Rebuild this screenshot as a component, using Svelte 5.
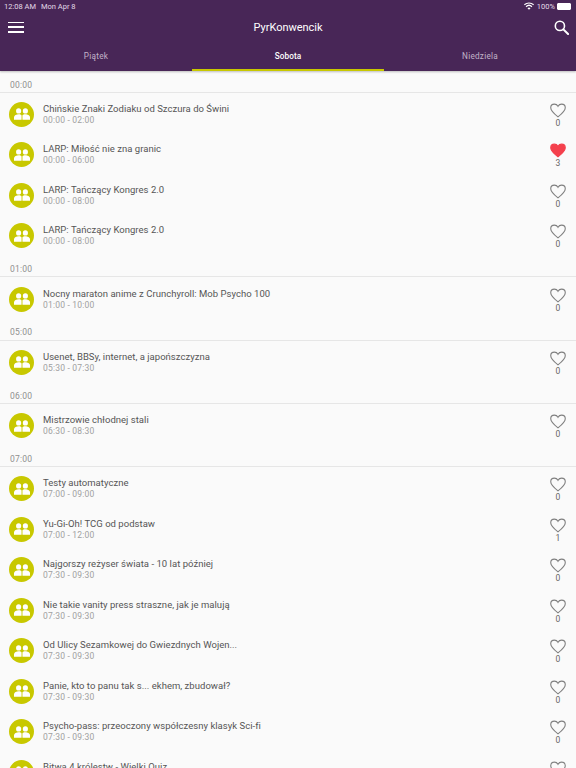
<script>
  const groups = [
    { time: '00:00', items: [
      ['Chińskie Znaki Zodiaku od Szczura do Świni', '00:00 - 02:00', 0],
      ['LARP: Miłość nie zna granic', '00:00 - 06:00', 3, true],
      ['LARP: Tańczący Kongres 2.0', '00:00 - 08:00', 0],
      ['LARP: Tańczący Kongres 2.0', '00:00 - 08:00', 0]
    ]},
    { time: '01:00', items: [['Nocny maraton anime z Crunchyroll: Mob Psycho 100', '01:00 - 10:00', 0]] },
    { time: '05:00', items: [['Usenet, BBSy, internet, a japońszczyzna', '05:30 - 07:30', 0]] },
    { time: '06:00', items: [['Mistrzowie chłodnej stali', '06:30 - 08:30', 0]] },
    { time: '07:00', items: [
      ['Testy automatyczne', '07:00 - 09:00', 0],
      ['Yu-Gi-Oh! TCG od podstaw', '07:00 - 12:00', 1],
      ['Najgorszy reżyser świata - 10 lat później', '07:30 - 09:30', 0],
      ['Nie takie vanity press straszne, jak je malują', '07:30 - 09:30', 0],
      ['Od Ulicy Sezamkowej do Gwiezdnych Wojen...', '07:30 - 09:30', 0],
      ['Panie, kto to panu tak s... ekhem, zbudował?', '07:30 - 09:30', 0],
      ['Psycho-pass: przeoczony współczesny klasyk Sci-fi', '07:30 - 09:30', 0],
      ['Bitwa 4 królestw - Wielki Quiz', '07:30 - 09:30', 0]
    ]}
  ];
  const heart = 'M12 20.5 C5 15 2 11.5 2 8 C2 5 4.3 3 7 3 C9 3 11 4.2 12 6 C13 4.2 15 3 17 3 C19.7 3 22 5 22 8 C22 11.5 19 15 12 20.5 Z';
</script>

<div class="page">
  <header class="top">
    <div class="status">
      <span class="clock">12:08 AM</span>
      <span class="date">Mon Apr 8</span>
      <span class="spacer"></span>
      <svg class="wifi" width="10" height="8" viewBox="0 0 22 17" aria-hidden="true">
        <path fill="#fff" d="M11 17 7.6 13.2a5 5 0 0 1 6.8 0zM5.6 11a8 8 0 0 1 10.8 0l2-2.2a11 11 0 0 0-14.8 0zM1.6 6.6a14 14 0 0 1 18.8 0l1.6-2A17 17 0 0 0 0 4.600z"/>
      </svg>
      <span class="pct">100%</span>
      <span class="battery"><span class="fill"></span></span>
    </div>
    <div class="bar">
      <button class="menu" aria-label="Menu"><span></span><span></span><span></span></button>
      <h1>PyrKonwencik</h1>
      <svg class="search" width="15" height="15" viewBox="0 0 16 16" aria-hidden="true">
        <circle cx="6.300" cy="6.300" r="4.900" fill="none" stroke="#fff" stroke-width="1.700"/>
        <path d="M10 10l5 5" stroke="#fff" stroke-width="2.200" stroke-linecap="round"/>
      </svg>
    </div>
    <nav class="tabs">
      <div class="tab">Piątek</div>
      <div class="tab active">Sobota</div>
      <div class="tab">Niedziela</div>
    </nav>
  </header>

  <main class="list">
    {#each groups as g}
      <div class="section">{g.time}</div>
      {#each g.items as it}
        <div class="row">
          <div class="avatar">
            <svg width="16" height="12" viewBox="0 0 18 13" aria-hidden="true">
              <circle cx="5.200" cy="3" r="2.900" fill="#fff"/>
              <circle cx="12.800" cy="3" r="2.900" fill="#fff"/>
              <path fill="#fff" d="M0 13V10.200C0 8 3 6.800 5.200 6.800S8.500 7.400 8.500 8.500V13ZM9.500 13V8.500C9.500 7.400 10.600 6.800 12.800 6.800S18 8 18 10.200V13Z"/>
            </svg>
          </div>
          <div class="text">
            <div class="title">{it[0]}</div>
            <div class="hours">{it[1]}</div>
          </div>
          <div class="like">
            <svg width="16" height="15" viewBox="1 2 22 19.500" aria-hidden="true">
              <path d={heart} class:on={it[3]} class="h"/>
            </svg>
            <span>{it[2]}</span>
          </div>
        </div>
      {/each}
    {/each}
  </main>
</div>

<style>
  :global(body) { margin: 0; background: #fafafa; }
  .page {
    width: 576px; height: 768px; overflow: hidden;
    font-family: Roboto, "Noto Sans", sans-serif;
    background: #fafafa;
    display: flex; flex-direction: column;
  }
  .top { background: #482657; color: #fff; height: 71px; flex: none; box-shadow: 0 1px 2px rgba(0,0,0,.25); position: relative; z-index: 1; }
  .status { height: 12px; display: flex; align-items: center; padding: 0 4px; font-size: 7.500px; color: #e4dae8; }
  .date { margin-left: 5px; }
  .spacer { flex: 1; }
  .wifi { margin-right: 3px; }
  .pct { margin-right: 2px; }
  .battery { width: 12px; height: 5px; border: .5px solid #fff; border-radius: 1px; margin-right: 1px; display: block; }
  .fill { display: block; height: 100%; background: #fff; }
  .bar { height: 30px; display: flex; align-items: center; justify-content: space-between; padding: 0 7px 0 8px; position: relative; }
  .menu { background: none; border: 0; padding: 0; width: 16px; height: 11px; display: flex; flex-direction: column; justify-content: space-between; }
  .menu span { display: block; height: 1.500px; background: #fff; }
  h1 { position: absolute; left: 0; right: 0; margin: 0; text-align: center; font-size: 11px; font-weight: 400; letter-spacing: -.02px; pointer-events: none; }
  .tabs { height: 29px; display: grid; grid-template-columns: repeat(3, 1fr); }
  .tab { display: flex; align-items: center; justify-content: center; font-size: 8.200px; font-weight: 400; color: #c2b3c9; letter-spacing: .25px; padding-bottom: 2px; box-sizing: border-box; }
  .active { color: #fff; border-bottom: 2px solid #c8c800; padding-bottom: 0; font-weight: 500; letter-spacing: .1px; }
  .section { height: 21.500px; box-sizing: border-box; border-bottom: 1px solid #e6e6e6; padding: 9px 0 0 10px; font-size: 8.500px; line-height: 10px; color: #8f8f8f; letter-spacing: .2px; }
  .row ~ .section { height: 22.800px; padding-top: 9.500px; }
  .row { height: 40.500px; flex: none; display: flex; align-items: center; padding: 3px 8px 0 9px; box-sizing: border-box; }
  .avatar { width: 25px; height: 25px; border-radius: 50%; background: #c8c800; display: flex; align-items: center; justify-content: center; flex: none; }
  .text { margin-left: 9px; flex: 1; min-width: 0; }
  .title { font-size: 9.500px; line-height: 12px; color: #555; letter-spacing: .03px; }
  .hours { font-size: 8.500px; line-height: 11px; color: #a0a0a0; letter-spacing: .2px; }
  .like { width: 20px; display: flex; flex-direction: column; align-items: center; font-size: 8.500px; color: #666; padding-top: 2px; }
  .like span { line-height: 10px; }
  .h { fill: none; stroke: #808080; stroke-width: 1.500; }
  .h.on { fill: #f4404c; stroke: #f4404c; }
</style>
